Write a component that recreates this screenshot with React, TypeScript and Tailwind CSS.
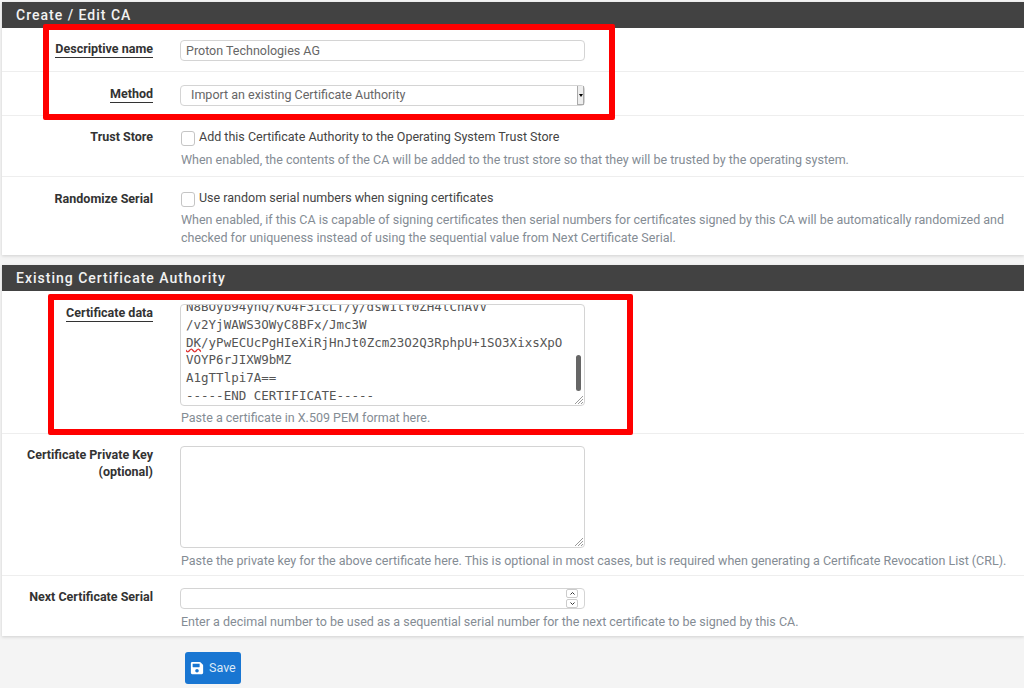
import React from 'react';

const labelCls = 'w-[151px] shrink-0 text-right text-[12.5px] font-bold leading-[17px] text-[#333]';
const helpCls = 'pl-px text-[12.5px] leading-[17.5px] text-[#848c94]';

const Row: React.FC<{ label: React.ReactNode; className: string; children: React.ReactNode }> = ({ label, className, children }) => (
  <div className={`flex border-b border-[#eeeeee] ${className}`}>
    <div className={labelCls}>{label}</div>
    <div className="ml-[27px] w-[826px]">{children}</div>
  </div>
);

const Req: React.FC<{ text: string }> = ({ text }) => (
  <span className="border-b border-[#333] pb-px">{text}</span>
);

const Heading: React.FC<{ text: string }> = ({ text }) => (
  <div className="h-[26px] bg-[#424242] pl-[14px] text-[14px] font-medium leading-[26px] tracking-[1px] text-[#f2f2f2]">{text}</div>
);

const Check: React.FC = () => (
  <span className="ml-px mt-[3px] h-[15px] w-[14px] shrink-0 rounded-[3px] border border-[#c5c5c5] bg-white" />
);

const Resize: React.FC = () => (
  <svg className="absolute bottom-px right-px" width="9" height="9" viewBox="0 0 9 9" stroke="#9a9a9a" strokeWidth="1">
    <path d="M1 9L9 1M4 9L9 4M7 9L9 7" />
  </svg>
);

const certLines = [
  '/v2YjWAWS3OWyC8BFx/Jmc3W',
  'DK/yPwECUcPgHIeXiRjHnJt0Zcm23O2Q3RphpU+1SO3XixsXpO',
  'VOYP6rJIXW9bMZ',
  'A1gTTlpi7A==',
  '-----END CERTIFICATE-----',
];

export default function App() {
  return (
    <div className="relative h-[688px] w-[1024px] overflow-hidden bg-[#f4f4f4] pl-[2px] pt-[2px] font-['Roboto',sans-serif]">
      <section className="bg-white shadow-[0_1px_3px_rgba(0,0,0,0.15)]">
        <Heading text="Create / Edit CA" />
        <Row label={<Req text="Descriptive name" />} className="h-[44px] pt-[12px]">
          <div className="h-[21px] w-[405px] rounded-[4px] border border-[#d4d4d4] pl-[5px] text-[12.5px] leading-[19px] text-[#666]">Proton Technologies AG</div>
        </Row>
        <Row label={<Req text="Method" />} className="h-[44px] pt-[13px]">
          <div className="relative h-[21px] w-[405px] rounded-[4px] border border-[#d4d4d4] pl-[10px] text-[12.5px] leading-[18px] text-[#666]">
            Import an existing Certificate Authority
            <span className="absolute right-0 top-0 flex h-[19px] w-[7px] items-center justify-center border-x border-b border-[#aaa] bg-[#eee]">
              <span className="h-0 w-0 border-x-[2.5px] border-t-[3px] border-x-transparent border-t-black" />
            </span>
          </div>
        </Row>
        <Row label="Trust Store" className="h-[61px] pt-[12px]">
          <div className="flex gap-[4px] text-[12.5px] leading-[17px] text-[#444]">
            <Check />
            <span>Add this Certificate Authority to the Operating System Trust Store</span>
          </div>
          <p className={`mt-[5px] ${helpCls}`}>When enabled, the contents of the CA will be added to the trust store so that they will be trusted by the operating system.</p>
        </Row>
        <Row label="Randomize Serial" className="h-[78px] border-b-0 pt-[13px]">
          <div className="-mt-px flex gap-[4px] text-[12.5px] leading-[17px] text-[#444]">
            <Check />
            <span>Use random serial numbers when signing certificates</span>
          </div>
          <p className={`mt-[4px] ${helpCls}`}>
            When enabled, if this CA is capable of signing certificates then serial numbers for certificates signed by this CA will be automatically randomized and checked for uniqueness instead of using the sequential value from Next Certificate Serial.
          </p>
        </Row>
      </section>

      <section className="mt-[10px] bg-white shadow-[0_1px_3px_rgba(0,0,0,0.15)]">
        <Heading text="Existing Certificate Authority" />
        <Row label={<Req text="Certificate data" />} className="h-[143px] pt-[13px]">
          <div className="relative h-[102px] w-[405px] overflow-hidden rounded-[4px] border border-[#d4d4d4] pl-[5px] font-['DejaVu_Sans_Mono',monospace] text-[12.5px] leading-[17.8px] text-[#555]">
            <div className="-mt-[7px]">N8BOyb94ynQ/KO4F3IcLT/y/dsW1tY0ZH4lChAVV</div>
            {certLines.map((line, i) => (
              <div key={line}>
                {i === 1 ? <span className="underline decoration-[#e03030] decoration-wavy">DK</span> : null}
                {i === 1 ? line.slice(2) : line}
              </div>
            ))}
            <span className="absolute right-[3px] top-[50px] h-[36px] w-[5px] rounded-full bg-[#666]" />
            <Resize />
          </div>
          <p className={`mt-[3px] ${helpCls}`}>Paste a certificate in X.509 PEM format here.</p>
        </Row>
        <Row label={<>Certificate Private Key<br />(optional)</>} className="h-[142px] pt-[12px]">
          <div className="relative h-[102px] w-[405px] rounded-[4px] border border-[#d4d4d4]">
            <Resize />
          </div>
          <p className={`mt-[4px] whitespace-nowrap ${helpCls}`}>Paste the private key for the above certificate here. This is optional in most cases, but is required when generating a Certificate Revocation List (CRL).</p>
        </Row>
        <Row label="Next Certificate Serial" className="h-[60px] border-b-0 pt-[12px]">
          <div className="relative h-[21px] w-[405px] rounded-[4px] border border-[#d4d4d4]">
            <span className="absolute right-[6px] top-0 flex h-[19px] w-[12px] flex-col gap-px">
              <span className="flex h-[9px] items-center justify-center rounded-[2px] border border-[#ccc]">
                <svg width="5" height="3" viewBox="0 0 5 3" fill="none" stroke="#333"><path d="M0.5 2.5L2.5 0.5L4.5 2.5" /></svg>
              </span>
              <span className="flex h-[9px] items-center justify-center rounded-[2px] border border-[#ccc]">
                <svg width="5" height="3" viewBox="0 0 5 3" fill="none" stroke="#333"><path d="M0.5 0.5L2.5 2.5L4.5 0.5" /></svg>
              </span>
            </span>
          </div>
          <p className={`mt-[4px] ${helpCls}`}>Enter a decimal number to be used as a sequential serial number for the next certificate to be signed by this CA.</p>
        </Row>
      </section>

      <button className="ml-[183px] mt-[16px] flex h-[32px] w-[56px] items-center gap-[5px] rounded-[3px] bg-[#1976d2] pl-[4px] text-[12.5px] text-[#dbe9f7]">
        <svg width="14" height="14" viewBox="0 0 448 512" fill="#fff" className="ml-px">
          <path d="M433.9 129.9l-83.9-83.9A48 48 0 0 0 316.1 32H48C21.5 32 0 53.5 0 80v352c0 26.5 21.5 48 48 48h352c26.5 0 48-21.5 48-48V163.9a48 48 0 0 0-14.1-34zM224 416c-35.3 0-64-28.7-64-64 0-35.3 28.7-64 64-64s64 28.7 64 64c0 35.3-28.7 64-64 64zm96-304.5V212c0 6.6-5.4 12-12 12H76c-6.6 0-12-5.4-12-12V108c0-6.6 5.4-12 12-12h228.5c3.2 0 6.2 1.3 8.5 3.5l3.5 3.5c2.3 2.3 3.5 5.3 3.5 8.5z" />
        </svg>
        Save
      </button>

      <div className="absolute left-[43px] top-[24px] h-[96px] w-[572px] rounded-[2px] border-[6px] border-[#ff0000]" />
      <div className="absolute left-[48px] top-[294px] h-[141px] w-[585px] rounded-[2px] border-[6px] border-[#ff0000]" />
    </div>
  );
}
